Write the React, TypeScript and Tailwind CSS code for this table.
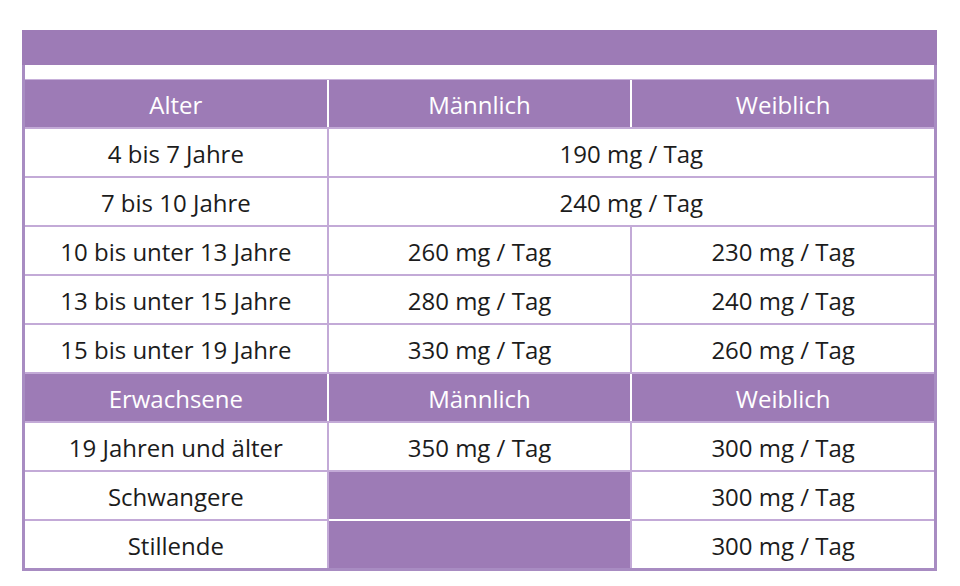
import React from "react";

const purple = "bg-[#9d7bb6]";

type Cell = { text?: string; span?: number; fill?: boolean; seam?: boolean };

const rows: { head?: boolean; cells: Cell[] }[] = [
  { head: true, cells: [{ text: "Alter" }, { text: "Männlich" }, { text: "Weiblich" }] },
  { cells: [{ text: "4 bis 7 Jahre" }, { text: "190 mg / Tag", span: 2 }] },
  { cells: [{ text: "7 bis 10 Jahre" }, { text: "240 mg / Tag", span: 2 }] },
  { cells: [{ text: "10 bis unter 13 Jahre" }, { text: "260 mg / Tag" }, { text: "230 mg / Tag" }] },
  { cells: [{ text: "13 bis unter 15 Jahre" }, { text: "280 mg / Tag" }, { text: "240 mg / Tag" }] },
  { cells: [{ text: "15 bis unter 19 Jahre" }, { text: "330 mg / Tag" }, { text: "260 mg / Tag" }] },
  { head: true, cells: [{ text: "Erwachsene" }, { text: "Männlich" }, { text: "Weiblich" }] },
  { cells: [{ text: "19 Jahren und älter" }, { text: "350 mg / Tag" }, { text: "300 mg / Tag" }] },
  { cells: [{ text: "Schwangere" }, { fill: true, seam: true }, { text: "300 mg / Tag" }] },
  { cells: [{ text: "Stillende" }, { fill: true }, { text: "300 mg / Tag" }] },
];

export default function App() {
  return (
    <div className="min-h-[586px] w-[960px] bg-white pt-[30px] pl-[22px]" style={{ fontFamily: "'Open Sans', Lato, sans-serif" }}>
      <div className="w-[915px] border-[3px] border-t-0 border-[#a88cc2]">
        <div className={`h-[35px] ${purple} -mx-[3px]`} />
        <div className="h-[15px] bg-white border-b border-[#c7b0da]" />
        <div className="flex flex-col gap-[2px] bg-[#c3aad7]">
          {rows.map((row, i) => (
            <div
              key={i}
              className={`grid h-[47px] grid-cols-3 gap-[2px] ${row.head ? "bg-white" : "bg-[#c3aad7]"}`}
            >
              {row.cells.map((c, j) => (
                <div
                  key={j}
                  className={`flex items-center justify-center pt-[3px] text-[24px] ${
                    c.span === 2 ? "col-span-2" : ""
                  } ${row.head || c.fill ? `${purple} text-white` : "bg-white text-[#1c1c1c]"} ${
                    c.seam ? "shadow-[0_2px_0_#ffffff]" : ""
                  }`}
                >
                  {c.text}
                </div>
              ))}
            </div>
          ))}
        </div>
      </div>
    </div>
  );
}
